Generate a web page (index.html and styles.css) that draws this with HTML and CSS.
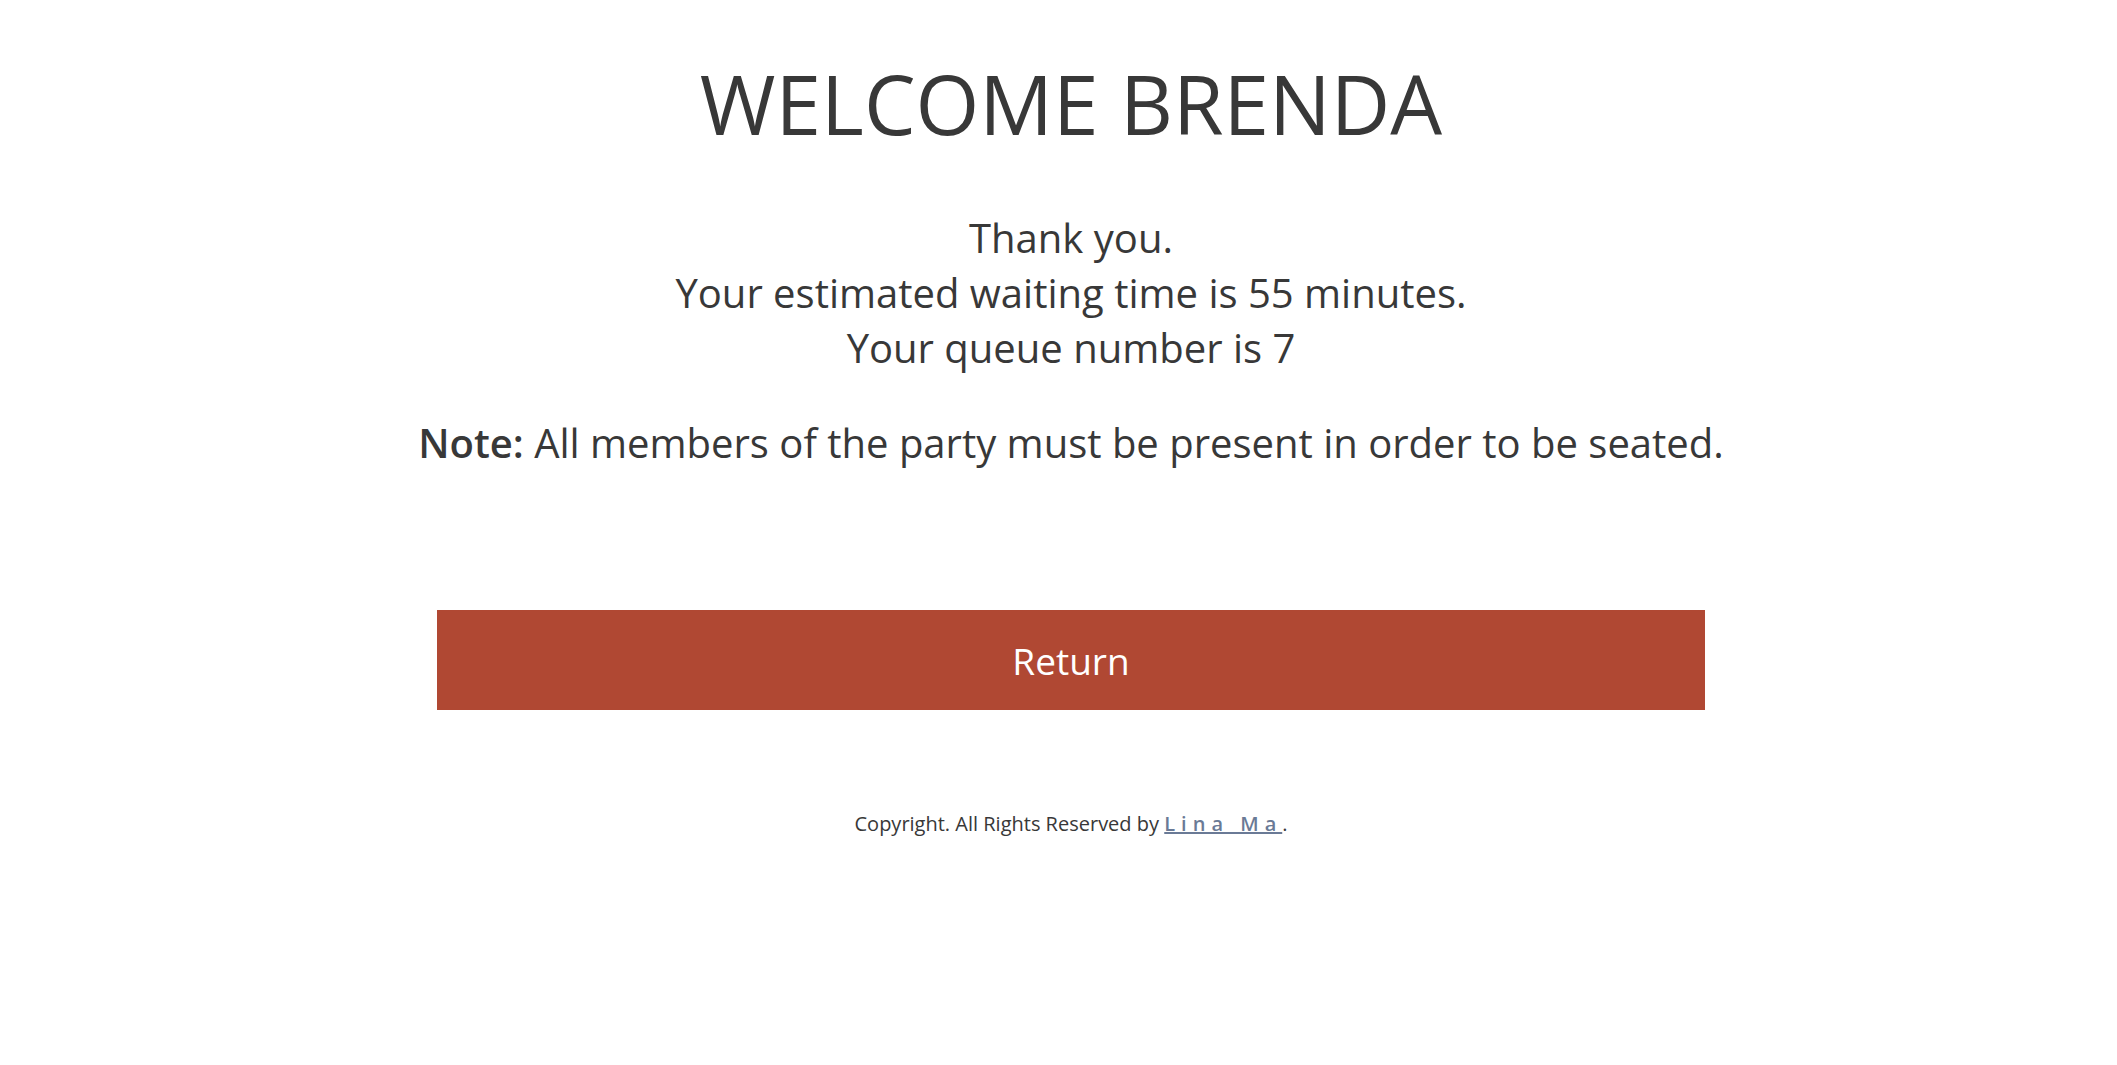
FILE: index.html
```html
<!DOCTYPE html>
<html>
<head>
<meta charset="utf-8">
<link rel="stylesheet" href="styles.css">
</head>
<body>
<main class="page">
  <h1 class="title">WELCOME BRENDA</h1>
  <div class="message">
    <p class="line">Thank you.</p>
    <p class="line">Your estimated waiting time is 55 minutes.</p>
    <p class="line">Your queue number is 7</p>
  </div>
  <p class="note"><strong>Note:</strong> All members of the party must be present in order to be seated.</p>
  <button class="return-btn" type="button">Return</button>
  <footer class="footer">Copyright. All Rights Reserved by <a class="author" href="#">Lina Ma</a>.</footer>
</main>
</body>
</html>
```

FILE: styles.css
```css
html, body {
  margin: 0;
  padding: 0;
  background: #ffffff;
}
body {
  font-family: "Open Sans", "Noto Sans", sans-serif;
  color: #383838;
}
.page {
  display: flex;
  flex-direction: column;
  align-items: center;
  padding-left: 25px;
  padding-top: 38px;
}
.title {
  margin: 0;
  font-size: 82px;
  font-weight: 400;
  line-height: 130px;
  color: #383838;
}
.message {
  margin-top: 42px;
  text-align: center;
}
.line {
  margin: 0;
  font-size: 40px;
  line-height: 55px;
}
.note {
  margin: 40px 0 0;
  font-size: 40px;
  line-height: 55px;
  text-align: center;
}
.note strong {
  font-weight: 600;
}
.return-btn {
  margin-top: 140px;
  width: 1268px;
  height: 100px;
  border: none;
  background: #b04833;
  color: #ffffff;
  font-family: "Open Sans", "Noto Sans", sans-serif;
  font-size: 37px;
  cursor: pointer;
}
.footer {
  margin-top: 100px;
  font-size: 20px;
  color: #383838;
}
.author {
  color: #6a7a96;
  font-weight: 600;
  letter-spacing: 0.3em;
  text-decoration: underline;
}
```
